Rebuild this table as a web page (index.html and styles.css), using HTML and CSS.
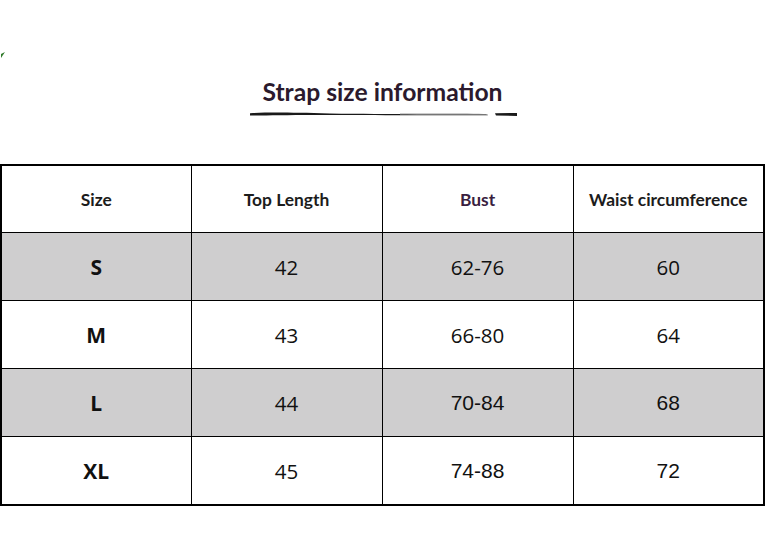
FILE: index.html
```html
<!DOCTYPE html>
<html>
<head>
<meta charset="utf-8">
<link rel="stylesheet" href="styles.css">
</head>
<body>
<div class="page">
  <div class="corner-mark">
    <svg width="6" height="6" viewBox="0 0 6 6"><path d="M0 2 L4 0 L0 6 Z" fill="#2f7a2a"/></svg>
  </div>
  <header class="heading">
    <h1 class="title">Strap size information</h1>
    <svg class="brush" width="268" height="6" viewBox="0 0 268 6">
      <path d="M0 2.2 C20 1.2 40 1.6 80 2.4 C140 3.2 200 3.0 236 3.2 L238 4.2 C200 4.2 140 4.2 80 4.0 C40 3.8 20 4.4 0 4.6 Z" fill="#1a1a1a"/>
      <path d="M150 2.6 C190 2.4 220 2.4 238 3.0 L238 3.6 C220 3.4 190 3.4 150 3.4 Z" fill="#9a9a9a"/>
      <path d="M245 2.2 L267 2.0 L267 5.0 L246 4.6 Z" fill="#1a1a1a"/>
    </svg>
  </header>
  <table class="sizes">
    <colgroup>
      <col class="c1"><col class="c2"><col class="c3"><col class="c4">
    </colgroup>
    <thead>
      <tr class="head-row">
        <th>Size</th>
        <th>Top Length</th>
        <th class="purple">Bust</th>
        <th>Waist circumference</th>
      </tr>
    </thead>
    <tbody>
      <tr class="shade">
        <td class="size">S</td><td class="num">42</td><td class="num range">62-76</td><td class="num">60</td>
      </tr>
      <tr>
        <td class="size">M</td><td class="num">43</td><td class="num range">66-80</td><td class="num">64</td>
      </tr>
      <tr class="shade">
        <td class="size">L</td><td class="num">44</td><td class="num arial">70-84</td><td class="num arial">68</td>
      </tr>
      <tr>
        <td class="size">XL</td><td class="num">45</td><td class="num arial">74-88</td><td class="num arial">72</td>
      </tr>
    </tbody>
  </table>
</div>
</body>
</html>
```

FILE: styles.css
```css
html, body {
  margin: 0;
  padding: 0;
  background: #ffffff;
}

.page {
  width: 765px;
  height: 552px;
  position: relative;
  display: flex;
  flex-direction: column;
}

.corner-mark {
  position: absolute;
  left: 1px;
  top: 52px;
  line-height: 0;
}

.heading {
  height: 164px;
  display: flex;
  flex-direction: column;
  align-items: center;
  box-sizing: border-box;
  padding-top: 77px;
}

.title {
  margin: 0;
  font-family: "Lato", "Liberation Sans", sans-serif;
  font-weight: 700;
  font-size: 24.7px;
  line-height: 30px;
  color: #2b1a2d;
  letter-spacing: 0;
}

.brush {
  display: block;
  margin-top: 4px;
  margin-left: 2px;
}

.sizes {
  width: 765px;
  table-layout: fixed;
  border-collapse: collapse;
  border: 2px solid #000;
}

.sizes col.c1 { width: 190px; }
.sizes col.c2,
.sizes col.c3 { width: 191px; }

.sizes th,
.sizes td {
  border: 1px solid #000;
  height: 67px;
  padding: 0;
  text-align: center;
  vertical-align: middle;
  color: #111;
}

.sizes th {
  height: 66px;
  font-family: "Lato", "Liberation Sans", sans-serif;
  font-weight: 700;
  font-size: 17.4px;
  color: #1c1c1c;
}

.sizes th.purple { color: #3a1f3f; }

.shade td { background: #cfcecf; }

.size {
  font-family: "Open Sans", "Liberation Sans", sans-serif;
  font-weight: 700;
  font-size: 21px;
}

.num {
  font-family: "Open Sans", "Liberation Sans", sans-serif;
  font-size: 20.5px;
  font-weight: 400;
}

.num.arial {
  font-family: "Liberation Sans", Arial, sans-serif;
  font-size: 21px;
}
```
